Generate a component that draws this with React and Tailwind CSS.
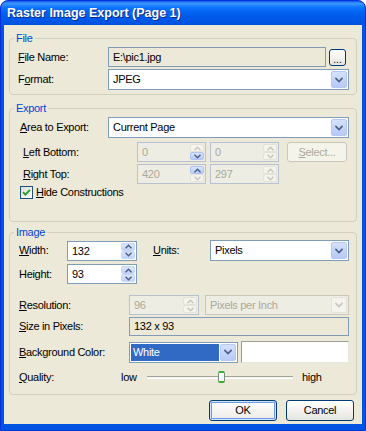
function Chevron({ dir = "down", color = "#4D6185", small }) {
  const d = dir === "up" ? "M1 4.5 L4 1.5 L7 4.5" : "M1 1.5 L4 4.5 L7 1.5";
  return (
    <svg width={small ? 7 : 8} height={small ? 5 : 6} viewBox="0 0 8 6" fill="none">
      <path d={d} stroke={color} strokeWidth="1.7" strokeLinecap="square" />
    </svg>
  );
}

function SpinBtn({ dir, state }) {
  const look =
    state === "hot"
      ? "bg-[linear-gradient(to_bottom,#D8E4FC,#B6CAF7)] border-[#B0C4F3]"
      : state === "off"
      ? "bg-[#F4F3EE] border-[#E5E3D8]"
      : "bg-[linear-gradient(to_bottom,#DCE6FD,#C1D3FB)] border-[#C7D6F8]";
  return (
    <div className={`flex-1 flex items-center justify-center rounded-[2px] border ${look}`}>
      <Chevron dir={dir} small color={state === "off" ? "#C9C7BA" : "#4D6185"} />
    </div>
  );
}

function Spin({ value, width = "w-[69px]", disabled, up = "on", down = "on" }) {
  return (
    <div
      className={`flex h-[20px] ${width} border ${
        disabled ? "border-[#B7C1CF] bg-[#EEEDE3] text-[#ACA899]" : "border-[#7F9DB9] bg-white text-black"
      }`}
    >
      <div className="flex-1 pl-[4px] leading-[18px]">{value}</div>
      <div className="flex flex-col w-[14px] py-px mr-px">
        <SpinBtn dir="up" state={up} />
        <SpinBtn dir="down" state={down} />
      </div>
    </div>
  );
}

function Combo({ value, width, disabled, selected, h = "h-[21px]" }) {
  return (
    <div
      className={`flex ${h} ${width} border ${
        disabled ? "border-[#C9C7BA] bg-[#EEEDE3] text-[#ACA899]" : "border-[#7F9DB9] bg-white text-black"
      }`}
    >
      <div className="flex-1 flex items-center p-px">
        <div
          className={`flex-1 h-full flex items-center pl-[2px] ${
            selected ? "bg-[#316AC5] text-white" : "pl-[3px]"
          }`}
        >
          {value}
        </div>
      </div>
      <div
        className={`w-[16px] my-px mr-px flex items-center justify-center rounded-[2px] border ${
          disabled
            ? "bg-[#F4F3EE] border-[#E5E3D8]"
            : "bg-[linear-gradient(to_bottom,#D5E1FD,#B6CAF7)] border-[#B6C8F2]"
        }`}
      >
        <Chevron color={disabled ? "#C9C7BA" : "#4D6185"} />
      </div>
    </div>
  );
}

function Label({ k, rest, pre = "", width }) {
  return (
    <div className={`${width} shrink-0 whitespace-nowrap`}>
      {pre}
      <span className="underline underline-offset-[1px]">{k}</span>
      {rest}
    </div>
  );
}

function Group({ title, height, className = "", children }) {
  return (
    <fieldset className={`${height} border border-[#D0D0BF] rounded-[4px] ${className}`}>
      <legend className="ml-[4px] px-[2px] leading-[13px] text-[#0046D5]">{title}</legend>
      {children}
    </fieldset>
  );
}

export default function App() {
  return (
    <div className="w-[366px] h-[431px] flex flex-col rounded-t-[8px] bg-[#0054E3] border border-[#0831D9] font-['Liberation_Sans',Arial,sans-serif] text-[11px] tracking-[-0.3px] text-black overflow-hidden">
      <div className="h-[24px] shrink-0 flex items-center px-[6px] rounded-t-[7px] bg-[linear-gradient(to_bottom,#0A5CEE_0%,#3D95FF_10%,#2A8BFF_16%,#0C74FC_28%,#0264F2_45%,#005BEA_65%,#0057E6_85%,#0050DC_100%)]">
        <span className="text-white font-bold text-[12.5px] tracking-normal [text-shadow:1px_1px_0_#0A2A8A]">
          Raster Image Export (Page 1)
        </span>
      </div>

      <div className="flex-1 mx-[3px] mb-[6px] bg-[#ECE9D8] px-[5px] pt-[7px] flex flex-col">
        <Group title="File" height="h-[63px]">
          <div className="pl-[8px] pt-[2px]">
            <div className="flex items-center h-[20px]">
              <Label k="F" rest="ile Name:" width="w-[90px]" />
              <div className="w-[218px] h-[20px] border border-[#7F9DB9] bg-[#ECE9D8] pl-[4px] leading-[18px]">
                E:\pic1.jpg
              </div>
              <div className="ml-[3px] w-[17px] h-[17px] rounded-[3px] border border-[#003C74] bg-[linear-gradient(to_bottom,#FFFFFF,#E6E5DE)] flex items-end justify-center leading-[10px] text-[10px] tracking-normal">
                ...
              </div>
            </div>
            <div className="flex items-center mt-[2px]">
              <Label pre="F" k="o" rest="rmat:" width="w-[90px]" />
              <Combo value="JPEG" width="w-[241px]" />
            </div>
          </div>
        </Group>

        <Group title="Export" height="h-[120px]" className="mt-[7px]">
          <div className="pl-[10px] pt-[2px]">
            <div className="flex items-center">
              <Label k="A" rest="rea to Export:" width="w-[88px]" />
              <Combo value="Current Page" width="w-[241px]" />
            </div>
            <div className="flex items-center mt-[4px] h-[20px]">
              <Label k="L" rest="eft Bottom:" width="w-[117px] pl-[3px]" />
              <Spin value="0" disabled up="off" down="hot" />
              <div className="ml-[4px]">
                <Spin value="0" disabled up="off" down="off" />
              </div>
              <div className="ml-[8px] w-[60px] h-[20px] rounded-[3px] border border-[#C9C7BA] bg-[#F5F4EA] text-[#ACA899] flex items-center justify-center">
                <span className="underline underline-offset-[1px]">S</span>elect...
              </div>
            </div>
            <div className="flex items-center mt-[2px] h-[20px]">
              <Label k="R" rest="ight Top:" width="w-[117px] pl-[3px]" />
              <Spin value="420" disabled up="hot" down="off" />
              <div className="ml-[4px]">
                <Spin value="297" disabled up="off" down="off" />
              </div>
            </div>
            <div className="flex items-center mt-[1px] h-[15px]">
              <div className="w-[13px] h-[13px] border border-[#1C5180] bg-[linear-gradient(135deg,#DCDCD7,#FFFFFF)] flex items-center justify-center">
                <svg width="9" height="9" viewBox="0 0 9 9" fill="none">
                  <path d="M1 4.2 L3.4 6.6 L8 1.8" stroke="#21A121" strokeWidth="1.9" />
                </svg>
              </div>
              <div className="ml-[3px]">
                <span className="underline underline-offset-[1px]">H</span>ide Constructions
              </div>
            </div>
          </div>
        </Group>

        <Group title="Image" height="h-[169px]" className="mt-[4px]">
          <div className="pl-[9px] pt-[1px]">
            <div className="flex items-center h-[21px]">
              <Label k="W" rest="idth:" width="w-[48px]" />
              <Spin value="132" width="w-[70px]" />
              <div className="ml-[16px] w-[57px]">
                <span className="underline underline-offset-[1px]">U</span>nits:
              </div>
              <Combo value="Pixels" width="w-[139px]" />
            </div>
            <div className="flex items-center h-[20px] mt-[3px]">
              <Label pre="Hei" k="g" rest="ht:" width="w-[48px]" />
              <Spin value="93" width="w-[70px]" />
            </div>
            <div className="flex items-center h-[20px] mt-[11px]">
              <Label k="R" rest="esolution:" width="w-[110px]" />
              <Spin value="96" width="w-[70px]" disabled up="off" down="off" />
              <div className="ml-[6px]">
                <Combo value="Pixels per Inch" width="w-[144px]" h="h-[20px]" disabled />
              </div>
            </div>
            <div className="flex items-center h-[19px] mt-[2px]">
              <Label k="S" rest="ize in Pixels:" width="w-[110px]" />
              <div className="w-[220px] h-[19px] border border-[#7F9DB9] bg-[#ECE9D8] pl-[4px] leading-[17px]">
                132 x 93
              </div>
            </div>
            <div className="flex items-center h-[22px] mt-[5px]">
              <Label k="B" rest="ackground Color:" width="w-[110px]" />
              <Combo value="White" width="w-[109px]" selected />
              <div className="ml-[3px] w-[108px] h-[22px] bg-white border border-t-[#9D9D92] border-l-[#9D9D92] border-b-[#E8E6DC] border-r-[#E8E6DC]" />
            </div>
            <div className="flex items-center h-[20px] mt-[4px]">
              <Label k="Q" rest="uality:" width="w-[102px]" />
              <div className="w-[26px] shrink-0">low</div>
              <div className="relative w-[146px] h-[12px] shrink-0 flex items-center">
                <div className="w-full h-[3px] border-t border-[#A4A294] bg-[#F4F3EE] border-b border-b-white" />
                <div className="absolute left-[71px] top-0 w-[7px] h-[12px] rounded-[2px] border border-[#7C8E77] bg-white border-t-[#2FB12F] border-b-[#2FB12F] border-t-2 border-b-2" />
              </div>
              <div className="ml-[9px]">high</div>
            </div>
          </div>
        </Group>

        <div className="flex justify-end gap-[9px] mt-[5px] mr-[3px]">
          <div className="w-[68px] h-[21px] rounded-[3px] border border-[#003C74] bg-[linear-gradient(to_bottom,#FFFFFF,#ECEBE6)] shadow-[inset_0_0_0_1px_#CEE7FF,inset_0_0_0_2px_#6E97EC] flex items-center justify-center">
            OK
          </div>
          <div className="w-[68px] h-[21px] rounded-[3px] border border-[#003C74] bg-[linear-gradient(to_bottom,#FFFFFF,#E6E5DE)] flex items-center justify-center">
            Cancel
          </div>
        </div>
      </div>
    </div>
  );
}
